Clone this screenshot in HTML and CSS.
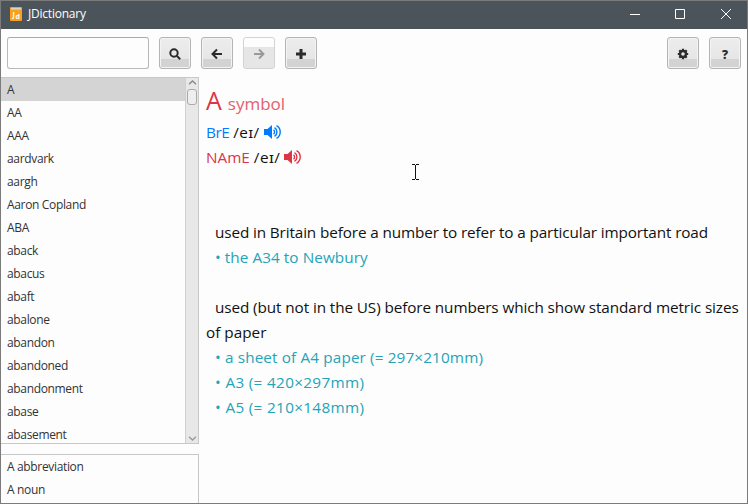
FILE: index.html
```
<!DOCTYPE html>
<html lang="en">
<head>
<meta charset="utf-8">
<title>JDictionary</title>
<link rel="stylesheet" href="styles.css">
</head>
<body>
<div class="window">
  <header class="titlebar">
    <svg class="logo" width="12" height="14" viewBox="0 0 12 14"><rect width="12" height="14" rx="1" fill="#f9a11b"/><path d="M1 1h10v1.6H1z" fill="#d9d4c8"/><text x="2.4" y="9.5" class="logo-text">J</text><text x="5.4" y="11.6" class="logo-text">d</text></svg>
    <h1 class="app-name">JDictionary</h1>
    <svg class="controls" width="104" height="12" viewBox="0 0 104 12" fill="none" stroke="#fff"><path d="M0 6.5h10M45.500 1.500h9v9h-9z"/><path d="M91 1l10 10M101 1L91 11"/></svg>
  </header>
  <div class="toolbar">
    <input class="search" type="text" aria-label="Search">
    <button class="btn" aria-label="Find"><svg width="14" height="14" viewBox="0 0 14 14" fill="none" stroke="#2b2b2b" stroke-width="2"><circle cx="6" cy="6" r="3.700"/><path d="M8.700 8.700l3.500 3.500"/></svg></button>
    <button class="btn" aria-label="Back"><svg width="14" height="14" viewBox="0 0 14 14" fill="none" stroke="#2b2b2b" stroke-width="2"><path d="M12 7H3M7 2.500L2.500 7 7 11.500"/></svg></button>
    <button class="btn disabled" aria-label="Forward"><svg width="14" height="14" viewBox="0 0 14 14" fill="none" stroke="#999" stroke-width="1.900"><path d="M2 7h9M7 2.500L11.500 7 7 11.500"/></svg></button>
    <button class="btn" aria-label="Add"><svg width="14" height="14" viewBox="0 0 14 14" fill="none" stroke="#2b2b2b" stroke-width="3"><path d="M2 7h10M7 2v10"/></svg></button>
    <span class="spacer"></span>
    <button class="btn" aria-label="Settings"><svg width="14" height="14" viewBox="0 0 14 14" fill="none" stroke="#2b2b2b"><circle cx="7" cy="7" r="3" stroke-width="2.400"/><path stroke-width="2.200" d="M7 1.800v2M7 10.200v2M1.800 7h2M10.200 7h2M3.300 3.300l1.300 1.300M9.400 9.400l1.300 1.300M10.700 3.300L9.400 4.600M4.600 9.400l-1.300 1.300"/></svg></button>
    <button class="btn help" aria-label="Help">?</button>
  </div>
  <div class="main">
    <aside class="side">
      <div class="words">
        <ul class="list">
          <li class="selected">A</li><li>AA</li><li>AAA</li><li>aardvark</li><li>aargh</li><li>Aaron Copland</li><li>ABA</li><li>aback</li><li>abacus</li><li>abaft</li><li>abalone</li><li>abandon</li><li>abandoned</li><li>abandonment</li><li>abase</li><li>abasement</li>
        </ul>
        <div class="scrollbar">
          <svg width="9" height="5" viewBox="0 0 9 5" fill="none" stroke="#888" stroke-width="1.300"><path d="M1 4.300L4.500 1 8 4.300"/></svg>
          <div class="thumb"></div>
          <svg class="down" width="9" height="5" viewBox="0 0 9 5" fill="none" stroke="#999" stroke-width="1.300"><path d="M1 .7L4.500 4 8 .7"/></svg>
        </div>
      </div>
      <ul class="list related"><li>A abbreviation</li><li>A noun</li></ul>
    </aside>
    <article class="entry">
      <h2 class="head"><span class="word">A</span> <span class="pos">symbol</span></h2>
      <p class="line pron"><span class="bre tight">BrE</span> <span class="ipa">/eɪ/</span> <svg class="bre" width="18" height="14" viewBox="0 0 18 14"><path fill="currentColor" d="M0 4h3.500L8 0v14L3.500 10H0z"/><path fill="none" stroke="currentColor" stroke-width="1.400" d="M9.500 4.900a2.500 2.500 0 0 1 0 4.200M10.500 2.700a5 5 0 0 1 0 8.600M12.500.7a7.200 7.200 0 0 1 0 12.600"/></svg></p>
      <p class="line pron"><span class="name">NAmE</span> <span class="ipa">/eɪ/</span> <svg class="name" width="18" height="14" viewBox="0 0 18 14"><path fill="currentColor" d="M0 4h3.500L8 0v14L3.500 10H0z"/><path fill="none" stroke="currentColor" stroke-width="1.400" d="M9.500 4.900a2.500 2.500 0 0 1 0 4.200M10.500 2.700a5 5 0 0 1 0 8.600M12.500.7a7.200 7.200 0 0 1 0 12.600"/></svg></p>
      <section class="sense first">
        <p class="line def s1">used in Britain before a number to refer to a particular important road</p>
        <p class="line ex e1">• the A34 to Newbury</p>
      </section>
      <section class="sense">
        <p class="line def s2">used (but not in the US) before numbers which show standard metric sizes</p>
        <p class="line s3">of paper</p>
        <p class="line ex e2">• a sheet of A4 paper (= 297×210mm)</p>
        <p class="line ex e3">• A3 (= 420×297mm)</p>
        <p class="line ex e3">• A5 (= 210×148mm)</p>
      </section>
    </article>
  </div>
  <svg class="cursor" width="7" height="16" viewBox="0 0 7 16" fill="none" stroke="#111"><path d="M0 .5h3M4 .5h3M3.500 1v14M0 15.500h3M4 15.500h3"/></svg>
</div>
</body>
</html>
```
FILE: styles.css
```
* { box-sizing: border-box; margin: 0; padding: 0; }
body { font-family: "Open Sans", "Noto Sans", sans-serif; background: #fdfdfd; overflow: hidden; }
.window { position: relative; width: 748px; height: 504px; border: 1px solid #7b7b7b; background: #fdfdfd; display: flex; flex-direction: column; overflow: hidden; }
.titlebar { height: 28px; flex: none; background: #4b545a; display: flex; align-items: center; padding: 0 13px 3px 9px; color: #fff; }
.logo-text { font: bold 7px "Open Sans", sans-serif; fill: #fff; }
.app-name { font-size: 12px; font-weight: 400; margin-left: 6px; letter-spacing: -.22px; line-height: 20px; }
.controls { margin-left: auto; }
.toolbar { height: 48px; flex: none; display: flex; gap: 10px; padding: 8px 6px 0 6px; }
.search { width: 142px; height: 32px; border: 1px solid #b9b9b9; border-top-color: #aaa; border-radius: 3px; background: #fdfdfd; outline: 0; }
.btn { width: 32px; height: 32px; flex: none; border: 1px solid #b4b4b4; border-radius: 3px; background: linear-gradient(#ededed 0, #e6e6e6 21px, #d3d3d3 21px); box-shadow: inset 0 0 0 1px #f3f3f3; display: flex; align-items: center; justify-content: center; padding-top: 2px; color: #2b2b2b; }
.disabled { border-color: #d3d3d3; background: linear-gradient(#fdfdfd 9px, #e6e6e6 9px); box-shadow: none; }
.help { font: 800 12px "Open Sans", sans-serif; }
.spacer { flex: 1; }
.main { flex: 1; display: flex; min-height: 0; }
.side { width: 198px; flex: none; display: flex; flex-direction: column; gap: 10px; }
.words { height: 367px; flex: none; display: flex; border: 1px solid #c8c8c8; border-left: 0; overflow: hidden; }
.list { list-style: none; flex: 1; font-size: 12px; letter-spacing: -.34px; color: #333; overflow: hidden; }
.list li { height: 23px; line-height: 24px; padding-left: 6px; white-space: nowrap; }
.list .selected { background: #d4d4d4; }
.scrollbar { width: 13px; background: #e8e8e8; border-left: 1px solid #d0d0d0; display: flex; flex-direction: column; align-items: center; padding: 2px 0 2px; }
.thumb { width: 10px; height: 16px; margin-top: 4px; border: 1px solid #aaa; border-radius: 3px; background: #eee; }
.down { margin-top: auto; }
.related { border: 1px solid #c8c8c8; border-width: 1px 1px 0 0; }
.entry { flex: 1; padding-left: 7px; color: #111; font-size: 15.300px; }
.head { height: 43px; font-weight: 400; line-height: 46px; white-space: nowrap; }
.word { font-size: 25px; color: #dc3545; }
.pos { font-size: 17px; color: #e4606d; }
.line { height: 25px; line-height: 25px; white-space: pre; }
.pron svg { vertical-align: -1px; }
.bre { color: #007bff; }
.tight { letter-spacing: -.5px; }
.ipa { letter-spacing: .45px; }
.name { color: #dc3545; }
.first { margin-top: 50px; }
.sense { margin-bottom: 25px; }
.def { padding-left: 9px; }
.ex { padding-left: 9px; color: #24a4b8; }
.s1 { letter-spacing: -.125px; }
.s2 { letter-spacing: -.1px; }
.e1 { letter-spacing: .06px; }
.e2 { letter-spacing: .13px; }
.e3 { letter-spacing: .33px; }
.cursor { position: absolute; left: 411px; top: 163px; }
```
